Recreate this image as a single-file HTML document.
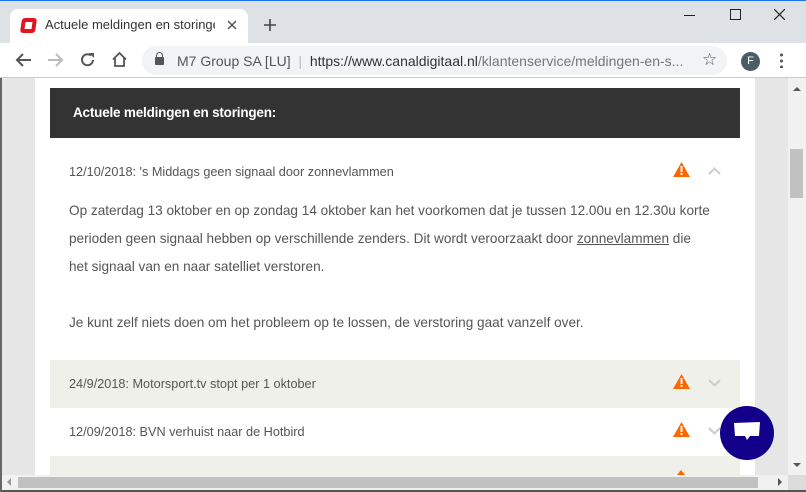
<!DOCTYPE html>
<html><head><style>
*{margin:0;padding:0;box-sizing:border-box}
body{width:806px;height:492px;overflow:hidden;font-family:"Liberation Sans",sans-serif;background:#555;position:relative}
.abs{position:absolute}
.tabbar{left:0;top:0;width:806px;height:43px;background:#dee1e6;border-top:1px solid #1a73e8}
.tab{left:10px;top:9px;width:238px;height:34px;background:#fff;border-radius:8px 8px 0 0}
.toolbar{left:0;top:43px;width:806px;height:35px;background:#fff;border-bottom:1px solid #ccc}
.omni{left:142px;top:46px;width:585px;height:29px;background:#f1f3f4;border-radius:15px}
.page{left:1px;top:78px;width:787px;height:397px;background:#e6e6e6}
.txt{color:#555;font-size:13.5px}
.row{left:50px;width:690px;height:48px}
</style></head><body>
<div class="abs tabbar"></div>
<div class="abs tab"></div>
<div class="abs" style="left:21px;top:18px;width:15px;height:15px;background:#e1151d;border-radius:3px;transform:skewX(-8deg)"><div style="margin:4px;width:7px;height:7px;background:#fff"></div></div>
<div class="abs" style="left:45px;top:17px;font-size:13px;color:#333;width:170px;overflow:hidden;white-space:nowrap">Actuele meldingen en storingen |</div>
<svg class="abs" style="left:227px;top:20px" width="10" height="10"><path d="M1 1L9 9M9 1L1 9" stroke="#555" stroke-width="1.5"/></svg>
<svg class="abs" style="left:264px;top:19px" width="12" height="12"><path d="M6 0V12M0 6H12" stroke="#444" stroke-width="1.6"/></svg>
<div class="abs" style="left:684px;top:15px;width:11px;height:1px;background:#222"></div>
<div class="abs" style="left:730px;top:9px;width:11px;height:11px;border:1px solid #222"></div>
<svg class="abs" style="left:774px;top:9px" width="11" height="11"><path d="M0 0L11 11M11 0L0 11" stroke="#222" stroke-width="1.2"/></svg>
<div class="abs toolbar"></div>
<svg class="abs" style="left:15px;top:53px" width="16" height="14"><path d="M16 7H2M8 1L2 7 8 13" stroke="#555" stroke-width="2" fill="none"/></svg>
<svg class="abs" style="left:48px;top:53px" width="16" height="14"><path d="M0 7H14M8 1L14 7 8 13" stroke="#bbb" stroke-width="2" fill="none"/></svg>
<svg class="abs" style="left:80px;top:52px" width="16" height="16"><path d="M13 8A5.5 5.5 0 1 1 11 3.5" stroke="#555" stroke-width="2" fill="none"/><path d="M9 1H14V6z" fill="#555"/></svg>
<svg class="abs" style="left:111px;top:51px" width="17" height="17"><path d="M2 8.5L8.5 2 15 8.5M4 7V15H13V7" stroke="#555" stroke-width="1.8" fill="none"/></svg>
<div class="abs omni"></div>
<div class="abs" style="left:155px;top:57px;width:9px;height:8px;background:#555;border-radius:1px"></div>
<div class="abs" style="left:156px;top:52px;width:7px;height:7px;border:1.5px solid #555;border-radius:4px 4px 0 0"></div>
<div class="abs" style="left:177px;top:53px;font-size:14px;color:#555;white-space:nowrap">M7 Group SA [LU] <span style="color:#bbb">&nbsp;|&nbsp;</span> <span style="color:#333">https://www.canaldigitaal.nl</span><span style="color:#777">/klantenservice/meldingen-en-s...</span></div>
<div class="abs" style="left:702px;top:50px;font-size:17px;color:#555">☆</div>
<div class="abs" style="left:741px;top:52px;width:19px;height:19px;border-radius:50%;background:#4a5c66;color:#fff;font-size:11px;text-align:center;line-height:19px">F</div>
<div class="abs" style="left:780px;top:52px;width:3px;height:16px;background:radial-gradient(circle,#555 1.4px,transparent 1.6px) 0 0/3px 6px"></div>
<div class="abs page"></div>
<div class="abs" style="left:0;top:78px;width:2px;height:414px;background:#666"></div>
<div class="abs" style="left:35px;top:78px;width:720px;height:397px;background:#fff"></div>
<div class="abs" style="left:50px;top:88px;width:690px;height:50px;background:#333"></div>
<div class="abs" style="left:73px;top:105px;color:#fff;font-weight:bold;font-size:13.5px;letter-spacing:-0.2px">Actuele meldingen en storingen:</div>
<div class="abs txt" style="left:69px;top:165px;font-size:12.7px">12/10/2018: 's Middags geen signaal door zonnevlammen</div>
<div class="abs txt" style="left:69px;top:197px;width:680px;white-space:nowrap;line-height:28px;font-size:13.6px">Op zaterdag 13 oktober en op zondag 14 oktober kan het voorkomen dat je tussen 12.00u en 12.30u korte<br>perioden geen signaal hebben op verschillende zenders. Dit wordt veroorzaakt door <u>zonnevlammen</u> die<br>het signaal van en naar satelliet verstoren.<br><br>Je kunt zelf niets doen om het probleem op te lossen, de verstoring gaat vanzelf over.</div>
<div class="abs row" style="top:360px;background:#f0f0eb"></div>
<div class="abs txt" style="left:69px;top:377px;font-size:12.7px">24/9/2018: Motorsport.tv stopt per 1 oktober</div>
<div class="abs row" style="top:408px;background:#fff"></div>
<div class="abs txt" style="left:69px;top:425px;font-size:12.7px">12/09/2018: BVN verhuist naar de Hotbird</div>
<div class="abs row" style="top:456px;height:19px;background:#f0f0eb"></div>
<svg class="abs" style="left:673px;top:162px" width="17" height="15"><path d="M8.5 0L17 15H0z" fill="#f60"/><rect x="7.5" y="4" width="2" height="6" fill="#fff"/><rect x="7.5" y="11" width="2" height="2" fill="#fff"/></svg>
<svg class="abs" style="left:673px;top:374px" width="17" height="15"><path d="M8.5 0L17 15H0z" fill="#f60"/><rect x="7.5" y="4" width="2" height="6" fill="#fff"/><rect x="7.5" y="11" width="2" height="2" fill="#fff"/></svg>
<svg class="abs" style="left:673px;top:422px" width="17" height="15"><path d="M8.5 0L17 15H0z" fill="#f60"/><rect x="7.5" y="4" width="2" height="6" fill="#fff"/><rect x="7.5" y="11" width="2" height="2" fill="#fff"/></svg>
<svg class="abs" style="left:677px;top:470px" width="8" height="5"><path d="M4 0L8 5H0z" fill="#f60"/></svg>
<svg class="abs" style="left:708px;top:167px" width="13" height="8"><path d="M1 7L6.5 1.5 12 7" stroke="#ccc" stroke-width="2" fill="none"/></svg>
<svg class="abs" style="left:708px;top:379px" width="13" height="8"><path d="M1 1L6.5 6.5 12 1" stroke="#ccc" stroke-width="2" fill="none"/></svg>
<svg class="abs" style="left:708px;top:427px" width="13" height="8"><path d="M1 1L6.5 6.5 12 1" stroke="#ccc" stroke-width="2" fill="none"/></svg>
<div class="abs" style="left:720px;top:406px;width:54px;height:54px;border-radius:50%;background:#12008a"></div>
<svg class="abs" style="left:733px;top:421px" width="28" height="24"><path d="M1 2L27 1 26 15H17L14 19 12 15H2z" fill="#fff"/></svg>
<div class="abs" style="left:788px;top:78px;width:18px;height:397px;background:#f1f1f1"></div>
<div class="abs" style="left:790px;top:149px;width:13px;height:49px;background:#c1c1c1"></div>
<div class="abs" style="left:793px;top:87px;border:4px solid transparent;border-bottom:4px solid #555;border-top:0"></div>
<div class="abs" style="left:793px;top:463px;border:4px solid transparent;border-top:4px solid #555;border-bottom:0"></div>
<div class="abs" style="left:2px;top:475px;width:786px;height:15px;background:#f1f1f1"></div>
<div class="abs" style="left:18px;top:477px;width:740px;height:11px;background:#c1c1c1"></div>
<div class="abs" style="left:788px;top:475px;width:18px;height:15px;background:#dcdcdc"></div>
<div class="abs" style="left:7px;top:478px;border:4px solid transparent;border-right:4px solid #999;border-left:0"></div>
<div class="abs" style="left:778px;top:478px;border:4px solid transparent;border-left:4px solid #555;border-right:0"></div>
</body></html>
